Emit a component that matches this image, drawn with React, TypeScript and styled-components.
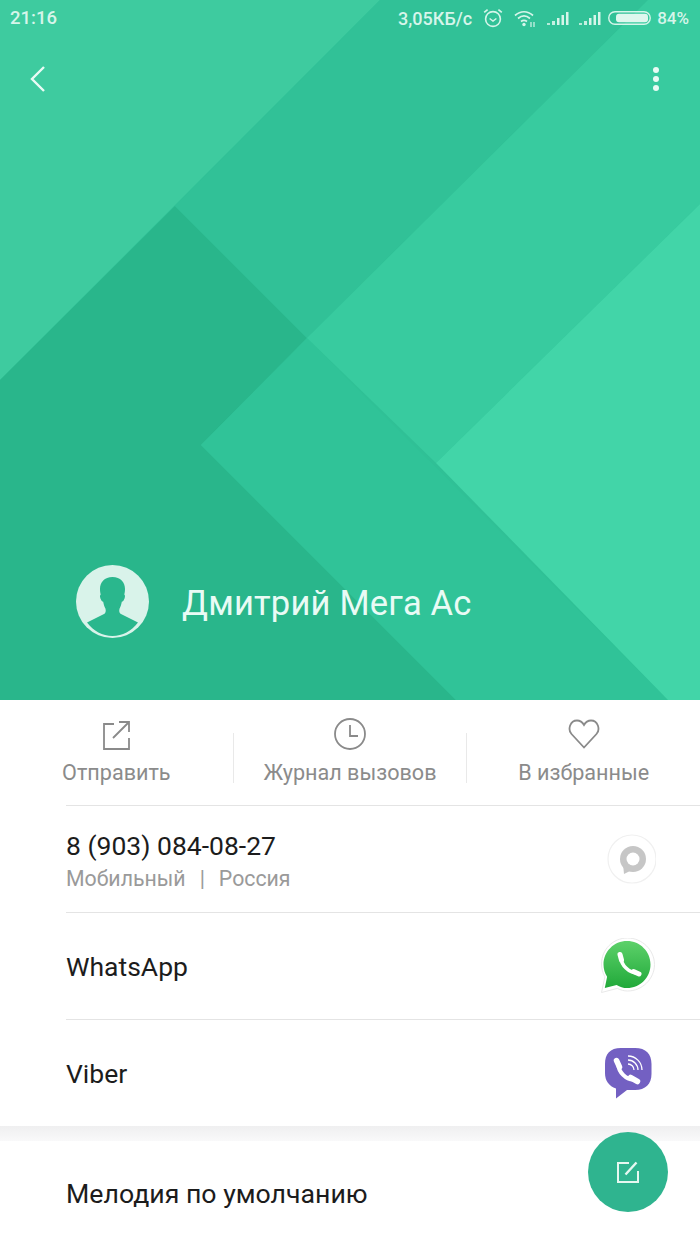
import styled, { createGlobalStyle } from 'styled-components';

const GlobalStyle = createGlobalStyle`
  html, body {
    margin: 0;
    padding: 0;
    background: #ffffff;
  }
  body {
    font-family: Roboto, "Liberation Sans", sans-serif;
  }
`;

const Screen = styled.div`
  position: relative;
  width: 700px;
  height: 1244px;
  overflow: hidden;
  background: #ffffff;
`;

const Header = styled.header`
  position: relative;
  height: 700px;
  display: flex;
  flex-direction: column;
  background: #30c096;
`;

const HeaderArt = styled.svg`
  position: absolute;
  inset: 0;
`;

const StatusBar = styled.div`
  position: relative;
  height: 36px;
  display: flex;
  align-items: center;
  padding: 0 11px 0 10px;
  color: #d6f5ea;
  font-size: 18px;
  font-weight: 500;
`;

const StatusTime = styled.span`
  flex: 1;
  font-size: 18.5px;
`;

const StatusText = styled.span<{ $gap: number }>`
  margin-right: ${(p) => p.$gap}px;
`;

const BatteryText = styled.span`
  font-size: 17px;
`;

const StatusIcon = styled.svg<{ $gap: number }>`
  display: block;
  margin-right: ${(p) => p.$gap}px;
`;

const Toolbar = styled.div`
  position: relative;
  height: 86px;
  display: flex;
  align-items: center;
  justify-content: space-between;
  padding: 0 40px 0 26px;
`;

const Profile = styled.div`
  position: relative;
  margin-top: auto;
  display: flex;
  align-items: center;
  gap: 33px;
  padding: 0 0 62px 76px;
`;

const Name = styled.div`
  padding-top: 2px;
  color: #e9fbf5;
  font-size: 34.5px;
  line-height: 42px;
  letter-spacing: 0.2px;
`;

const Actions = styled.div`
  height: 105px;
  display: flex;
  align-items: flex-end;
`;

const ActionItem = styled.div`
  flex: 1;
  height: 105px;
  display: flex;
  flex-direction: column;
  align-items: center;
  padding-top: 17px;
  box-sizing: border-box;
`;

const ActionLabel = styled.div`
  margin-top: 8px;
  color: #8b8b8b;
  font-size: 21.6px;
  line-height: 28px;
`;

const ActionDivider = styled.div`
  width: 1px;
  height: 50px;
  margin-bottom: 22px;
  background: #e9e9e9;
`;

const List = styled.div`
  padding-left: 66px;
`;

const Row = styled.div`
  height: 107px;
  box-sizing: border-box;
  display: flex;
  align-items: center;
  justify-content: space-between;
  padding-right: 44px;
  border-top: 1px solid #e4e4e4;
`;

const RowText = styled.div`
  padding-top: 2px;
`;

const ContactText = styled.div`
  padding-top: 4px;
`;

const RowTitle = styled.div`
  color: #1c1c1c;
  font-size: 26.5px;
  line-height: 32px;
`;

const RowMeta = styled.div`
  display: flex;
  gap: 14px;
  margin-top: 3px;
  color: #9a9a9a;
  font-size: 21.3px;
  line-height: 28px;
`;

const SectionGap = styled.div`
  height: 15px;
  background: linear-gradient(#efeff0, #f9f9fa);
`;

const PlainRow = styled.div`
  height: 104px;
  padding: 2px 0 0 66px;
  display: flex;
  align-items: center;
  color: #1c1c1c;
  font-size: 26.7px;
  box-sizing: border-box;
`;

const Fab = styled.button`
  position: absolute;
  left: 588px;
  top: 1132px;
  width: 80px;
  height: 80px;
  padding: 0;
  border: 0;
  border-radius: 50%;
  display: flex;
  align-items: center;
  justify-content: center;
  background: #2fb48f;
`;

const HeaderBackdrop = () => (
  <HeaderArt width="700" height="700" viewBox="0 0 700 700">
    <polygon points="0,0 380,0 0,380" fill="#3ecb9f" />
    <polygon points="0,380 175,206 307,338 201,445 456,700 0,700" fill="#29b68b" />
    <polygon points="380,0 648,0 307,338 175,206" fill="#31c197" />
    <polygon points="201,445 307,338 668,700 456,700" fill="#30c398" />
    <polygon points="648,0 700,0 700,204 436,463 307,338" fill="#38cb9f" />
    <polygon points="700,204 700,700 668,700 436,463" fill="#42d5a8" />
  </HeaderArt>
);

const AlarmIcon = () => (
  <StatusIcon $gap={11} width="20" height="20" viewBox="0 0 20 20" fill="none" stroke="#d6f5ea">
    <circle cx="10" cy="11" r="7.4" strokeWidth="1.6" />
    <path d="M6.6 10.5 10 13l3.4-2.5" strokeWidth="1.5" />
    <path d="M1.2 4.4 4.6 1.6M18.8 4.4l-3.4-2.8" strokeWidth="1.7" />
  </StatusIcon>
);

const WifiIcon = () => (
  <StatusIcon $gap={11} width="22" height="20" viewBox="0 0 22 20" fill="none" stroke="#d6f5ea">
    <path d="M1 7.5c5.500-5 12.500-5 18 0" strokeWidth="1.7" />
    <path d="M4 10.500c3.800-3.300 8.200-3.300 12 0" strokeWidth="1.7" />
    <path d="M7 13.500c2-1.600 4-1.600 6 0" strokeWidth="1.7" />
    <circle cx="10" cy="16.500" r="1.700" fill="#d6f5ea" stroke="none" />
    <path d="M17 14v5M20 14v5" strokeWidth="1.200" />
  </StatusIcon>
);

const SignalIcon = ({ gap }: { gap: number }) => (
  <StatusIcon $gap={gap} width="22" height="18" viewBox="0 0 22 18" fill="#d6f5ea">
    <rect x="0" y="14" width="3" height="2" opacity="0.8" />
    <rect x="5" y="12" width="3" height="4" opacity="0.9" />
    <rect x="10" y="9" width="2.500" height="7" />
    <rect x="14.500" y="6" width="2.500" height="10" />
    <rect x="19" y="3" width="2.500" height="13" />
  </StatusIcon>
);

const BatteryIcon = () => (
  <StatusIcon $gap={6} width="43" height="18" viewBox="0 0 43 18" fill="none">
    <rect x="0.750" y="2.750" width="41.500" height="12.500" rx="6.250" stroke="#d6f5ea" strokeWidth="1.400" />
    <rect x="8" y="4.800" width="32" height="8.400" rx="3" fill="#dff7ee" />
  </StatusIcon>
);

const BackIcon = () => (
  <svg width="24" height="30" viewBox="0 0 24 30" fill="none">
    <path d="M18 3 6 15l12 12" stroke="#e9fbf5" strokeWidth="2.400" />
  </svg>
);

const MoreIcon = () => (
  <svg width="8" height="26" viewBox="0 0 8 26" fill="#e9fbf5">
    <circle cx="4" cy="4" r="3" />
    <circle cx="4" cy="13" r="3" />
    <circle cx="4" cy="22" r="3" />
  </svg>
);

const AvatarIcon = () => (
  <svg width="73" height="73" viewBox="0 0 73 73">
    <circle cx="36.500" cy="36.500" r="36.500" fill="#d9f3ea" />
    <path
      d="M36.500 12c-8 0-12.500 5-12.500 12 0 2 .3 4 .7 5.500-1 .5-1 3 .5 5.500.5 1 1 1.500 2 1.800.500 3 1.300 5.300 2.300 7 .500 2 .300 3.800-1 5L11 57.500C17.500 66 26.500 71 36.500 71S55.500 66 62 57.500L44.500 48.800c-1.300-1.200-1.500-3-1-5 1-1.700 1.800-4 2.300-7 1-.3 1.500-.8 2-1.800 1.500-2.500 1.500-5 .5-5.500.4-1.500.7-3.500.7-5.500 0-7-4.500-12-12.500-12z"
      fill="#2ab78d"
    />
  </svg>
);

const ShareIcon = () => (
  <svg width="32" height="34" viewBox="0 0 32 34" fill="none" stroke="#8a8a8a" strokeWidth="1.800">
    <path d="M14 7H4v25h25V21" />
    <path d="M13 21 28.500 5.500M19 5h10v10" />
  </svg>
);

const ClockIcon = () => (
  <svg width="32" height="34" viewBox="0 0 32 34" fill="none" stroke="#8a8a8a" strokeWidth="1.800">
    <circle cx="16" cy="17" r="15" />
    <path d="M16 8v11h8" />
  </svg>
);

const HeartIcon = () => (
  <svg width="32" height="34" viewBox="0 0 32 34" fill="none" stroke="#8a8a8a" strokeWidth="1.800">
    <path d="M16 30.500 3.500 17C-.5 12.500 2 3.500 9 3.500c3.200 0 5.500 1.800 7 4.500 1.500-2.700 3.800-4.500 7-4.500 7 0 9.500 9 5.500 13.500z" />
  </svg>
);

const MessageIcon = () => (
  <svg width="56" height="56" viewBox="0 0 56 56" fill="none">
    <circle cx="32" cy="28" r="24" fill="#ffffff" stroke="#f0f0f0" strokeWidth="1.200" />
    <circle cx="33" cy="28" r="13" fill="#c6c6c6" />
    <path d="M23 33 24 43l8-4z" fill="#c6c6c6" />
    <circle cx="33" cy="28" r="6.500" fill="#ffffff" />
  </svg>
);

const WhatsAppIcon = () => (
  <svg width="56" height="56" viewBox="0 0 56 56">
    <defs>
      <linearGradient id="wa" x1="0" y1="0" x2="0" y2="1">
        <stop offset="0" stopColor="#5dd16a" />
        <stop offset="1" stopColor="#21a93a" />
      </linearGradient>
    </defs>
    <path d="M27.500 0C13 0 1.500 11.500 1.500 26c0 4.800 1.300 9 3.400 12.800L1.500 54.500l15.800-4.100C20.500 52 24 53 27.500 53 42 53 54.500 41 54.500 26.500S42 0 27.500 0z" fill="#ffffff" stroke="#e9e9e9" strokeWidth="1" />
    <path d="M27 3C14 3 3.500 13.500 3.500 26.500c0 4.600 1.300 8.700 3.600 12.200L4.800 50l11.800-3.100C19.800 48.900 23.300 50 27 50c13 0 23.500-10.500 23.500-23.500S40 3 27 3z" fill="url(#wa)" />
    <path d="M21 19.500C21 27 29 35 37 35" fill="none" stroke="#ffffff" strokeWidth="3.500" />
    <path d="M20 16.500 21.500 22M33.500 33.500l5.500 2.500" fill="none" stroke="#ffffff" strokeWidth="5" strokeLinecap="round" />
  </svg>
);

const ViberIcon = () => (
  <svg width="56" height="56" viewBox="0 0 56 56">
    <path
      d="M21 3h14c11 0 16.500 6 16.500 16v10c0 10-6 16-16.500 16h-8L16 53.500V43.500C9 41 5 36 5 28V19C5 9 10 3 21 3z"
      fill="#7360c2"
    />
    <path d="M18.500 20C18.500 27 26 34.500 33 34.500" fill="none" stroke="#ffffff" strokeWidth="4" />
    <path d="M16.500 15.500 19.500 22M30.500 32.500 37.500 36.500" fill="none" stroke="#ffffff" strokeWidth="5.500" strokeLinecap="round" />
    <path d="M28 11a14 14 0 0 1 14 14M28 15a10 10 0 0 1 10 10M28 19a6 6 0 0 1 6 6" fill="none" stroke="#ffffff" strokeWidth="1.300" />
  </svg>
);

const EditIcon = () => (
  <svg width="24" height="24" viewBox="0 0 24 24" fill="none" stroke="#e6f8f1" strokeWidth="2">
    <path d="M13 3H2v19h20V11" />
    <path d="M9.500 14.500 20.500 2.500" strokeWidth="2.400" />
  </svg>
);

export default function App() {
  return (
    <Screen>
      <GlobalStyle />
      <Header>
        <HeaderBackdrop />
        <StatusBar>
          <StatusTime>21:16</StatusTime>
          <StatusText $gap={11}>3,05КБ/с</StatusText>
          <AlarmIcon />
          <WifiIcon />
          <SignalIcon gap={10} />
          <SignalIcon gap={7} />
          <BatteryIcon />
          <BatteryText>84%</BatteryText>
        </StatusBar>
        <Toolbar>
          <BackIcon />
          <MoreIcon />
        </Toolbar>
        <Profile>
          <AvatarIcon />
          <Name>Дмитрий Мега Ас</Name>
        </Profile>
      </Header>
      <Actions>
        <ActionItem>
          <ShareIcon />
          <ActionLabel>Отправить</ActionLabel>
        </ActionItem>
        <ActionDivider />
        <ActionItem>
          <ClockIcon />
          <ActionLabel>Журнал вызовов</ActionLabel>
        </ActionItem>
        <ActionDivider />
        <ActionItem>
          <HeartIcon />
          <ActionLabel>В избранные</ActionLabel>
        </ActionItem>
      </Actions>
      <List>
        <Row>
          <ContactText>
            <RowTitle>8 (903) 084-08-27</RowTitle>
            <RowMeta>
              <span>Мобильный</span>
              <span>|</span>
              <span>Россия</span>
            </RowMeta>
          </ContactText>
          <MessageIcon />
        </Row>
        <Row>
          <RowText>
            <RowTitle>WhatsApp</RowTitle>
          </RowText>
          <WhatsAppIcon />
        </Row>
        <Row>
          <RowText>
            <RowTitle>Viber</RowTitle>
          </RowText>
          <ViberIcon />
        </Row>
      </List>
      <SectionGap />
      <PlainRow>Мелодия по умолчанию</PlainRow>
      <Fab>
        <EditIcon />
      </Fab>
    </Screen>
  );
}
